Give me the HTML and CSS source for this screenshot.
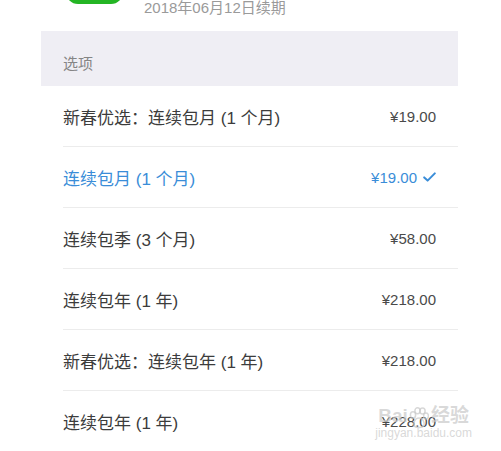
FILE: index.html
```html
<!DOCTYPE html>
<html lang="zh-CN">
<head>
<meta charset="UTF-8">
<meta name="viewport" content="width=device-width, initial-scale=1.0">
<title>选项</title>
<link rel="stylesheet" href="styles.css">
</head>
<body>

<div class="page">
  <div class="header">
    <div class="app-icon"></div>
    <div class="renew">2018年06月12日续期</div>
  </div>

  <div class="section-title">选项</div>

  <ul class="options">
    <li class="option">
      <span class="name">新春优选：连续包月 (1 个月)</span>
      <span class="price">¥19.00</span>
    </li>
    <li class="option selected">
      <span class="name">连续包月 (1 个月)</span>
      <span class="price">¥19.00
        <svg class="check" width="13" height="10" viewBox="0 0 13 10"><path d="M1.2 5.4 L4.6 8.6 L11.8 1.4" fill="none" stroke="currentColor" stroke-width="2" stroke-linecap="round" stroke-linejoin="round"/></svg>
      </span>
    </li>
    <li class="option">
      <span class="name">连续包季 (3 个月)</span>
      <span class="price">¥58.00</span>
    </li>
    <li class="option">
      <span class="name">连续包年 (1 年)</span>
      <span class="price">¥218.00</span>
    </li>
    <li class="option">
      <span class="name">新春优选：连续包年 (1 年)</span>
      <span class="price">¥218.00</span>
    </li>
    <li class="option last">
      <span class="name">连续包年 (1 年)</span>
      <span class="price">¥228.00</span>
      <!-- 水印 -->
      <div class="watermark">
        <span class="wm-logo">Bai<svg class="wm-paw" width="20" height="22" viewBox="0 0 20 22"><g fill="none" stroke="currentColor" stroke-width="1.5"><ellipse cx="4" cy="8" rx="2.6" ry="3.2"/><ellipse cx="8.5" cy="3.8" rx="2.6" ry="3"/><ellipse cx="13.5" cy="4" rx="2.6" ry="3"/><ellipse cx="17" cy="9" rx="2.4" ry="3"/><path d="M10 11 C6 11 4 16 5 18.5 C6.5 21 13.5 21 15 18.5 C16 16 14 11 10 11 Z"/></g></svg>经验</span>
        <span class="wm-url">jingyan.baidu.com</span>
      </div>
    </li>
  </ul>
</div>

</body>
</html>
```

FILE: styles.css
```css
body {
  margin: 0;
  padding: 0;
  background-color: #fff;
  font-family: "Liberation Sans", Arial, "Noto Sans CJK SC", sans-serif;
  overflow: hidden;
}
.page {
  width: 417px;
  margin-left: 41px;
}
.header {
  height: 31px;
  display: flex;
  overflow: hidden;
}
.app-icon {
  width: 57px;
  height: 44px;
  margin-top: -40px;
  margin-left: 25px;
  border-radius: 12px;
  background-color: #24b524;
}
.renew {
  margin-left: 21px;
  margin-top: -1px;
  font-size: 15px;
  line-height: 18px;
  color: #9a9a9a;
}
.section-title {
  height: 55px;
  background-color: #efeef4;
  padding-left: 22px;
  box-sizing: border-box;
  display: flex;
  align-items: center;
  font-size: 15px;
  color: #858585;
  padding-top: 7px;
}
.options {
  list-style: none;
  margin: 0;
  padding: 0 0 0 22px;
}
.option {
  height: 60px;
  border-bottom: 1px solid #ececec;
  display: flex;
  align-items: center;
  justify-content: space-between;
  padding-right: 22px;
  position: relative;
}
.option.last {
  border-bottom: none;
}
.option .name {
  font-size: 17px;
  color: #3c3c3c;
}
.option .price {
  font-size: 15px;
  color: #4a4a4a;
  display: flex;
  align-items: center;
}
.option.selected .name,
.option.selected .price {
  color: #3a8dd8;
}
.check {
  margin-left: 6px;
}
.watermark {
  position: absolute;
  right: -14px;
  top: 14px;
  display: flex;
  flex-direction: column;
  align-items: center;
  color: rgba(200, 200, 200, 0.7);
  pointer-events: none;
}
.wm-logo {
  display: flex;
  align-items: flex-end;
  font-size: 19px;
  font-weight: bold;
  line-height: 22px;
}
.wm-paw {
  margin: 0 2px -2px 1px;
}
.wm-url {
  font-size: 12px;
  line-height: 13px;
}
```
